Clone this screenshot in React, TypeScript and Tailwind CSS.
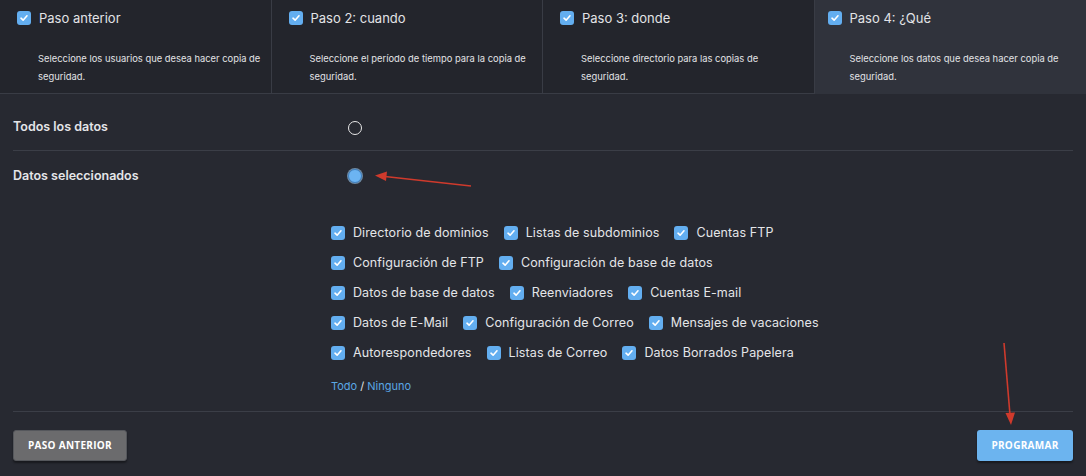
import React from 'react'

const font = { fontFamily: 'Inter, "Noto Sans", sans-serif' }

interface Step {
  title: string
  desc: string
  active?: boolean
}

const steps: Step[] = [
  { title: 'Paso anterior', desc: 'Seleccione los usuarios que desea hacer copia de seguridad.' },
  { title: 'Paso 2: cuando', desc: 'Seleccione el período de tiempo para la copia de seguridad.' },
  { title: 'Paso 3: donde', desc: 'Seleccione directorio para las copias de seguridad.' },
  { title: 'Paso 4: ¿Qué', desc: 'Seleccione los datos que desea hacer copia de seguridad.', active: true },
]

const rows: string[][] = [
  ['Directorio de dominios', 'Listas de subdominios', 'Cuentas FTP'],
  ['Configuración de FTP', 'Configuración de base de datos'],
  ['Datos de base de datos', 'Reenviadores', 'Cuentas E-mail'],
  ['Datos de E-Mail', 'Configuración de Correo', 'Mensajes de vacaciones'],
  ['Autorespondedores', 'Listas de Correo', 'Datos Borrados Papelera'],
]

function Check() {
  return (
    <span className="flex h-[14px] w-[14px] shrink-0 items-center justify-center rounded-[3px] bg-[#63aef0]">
      <svg width="10" height="10" viewBox="0 0 10 10" fill="none">
        <path d="M2 5.2 L4.1 7.2 L8 2.8" stroke="white" strokeWidth="1.6" strokeLinecap="round" strokeLinejoin="round" />
      </svg>
    </span>
  )
}

export default function App() {
  return (
    <div className="relative h-[476px] w-full overflow-hidden bg-[#272931] text-[#e4e5e8]" style={font}>
      <div className="grid grid-cols-4">
        {steps.map((s, i) => (
          <div
            key={s.title}
            className={
              s.active
                ? 'h-[94px] bg-[#30333c] pl-[13px] pt-[10px]'
                : 'h-[94px] border-b border-r border-[#393c45] bg-[#23252c] pl-[17px] pt-[10px]'
            }
          >
            <div className="flex items-center gap-[8px]">
              <Check />
              <span className="text-[13px] leading-[16px] text-[#e2e3e6]">{s.title}</span>
            </div>
            <p className={i === 3 ? 'mt-[24px] pl-[22px] pr-[6px] text-[9.4px] leading-[18px] text-[#e2e3e6]' : 'mt-[24px] pl-[21px] pr-[6px] text-[9.4px] leading-[18px] text-[#e2e3e6]'}>
              {s.desc}
            </p>
          </div>
        ))}
      </div>

      <div className="px-[13px]">
        <div className="flex h-[57px] items-center border-b border-[#3b3e47] pt-[11px]">
          <span className="w-[335px] text-[12.5px] font-semibold">Todos los datos</span>
          <span className="h-[14px] w-[14px] rounded-full border-[1.5px] border-[#e8e8e8]" />
        </div>
        <div className="flex h-[50px] items-center">
          <span className="w-[335px] text-[12.5px] font-semibold">Datos seleccionados</span>
          <span className="flex h-[14px] w-[14px] items-center justify-center rounded-full border border-[#3f7fbf] bg-[#6cb4f2] ring-1 ring-[#9cc9ee]/60" />
        </div>

        <div className="ml-[318px] mt-[17px]">
          {rows.map((r, i) => (
            <div key={i} className="flex h-[30px] items-center gap-[15px]">
              {r.map(label => (
                <label key={label} className="flex items-center gap-[8px] text-[12.5px] tracking-[0.1px] text-[#e4e5e8]">
                  <Check />
                  {label}
                </label>
              ))}
            </div>
          ))}
          <div className="mt-[10px] text-[11px] leading-[16px]">
            <span className="text-[#5aa7e4]">Todo</span>
            <span className="text-[#e4e5e8]"> / </span>
            <span className="text-[#5aa7e4]">Ninguno</span>
          </div>
        </div>

        <div className="mt-[17px] border-t border-[#3b3e47]" />

        <div className="mt-[18px] flex justify-between" style={{ fontFamily: '"Open Sans", sans-serif' }}>
          <button className="h-[31px] w-[114px] rounded-[3px] border border-[#55575c] bg-[#6b6b6d] text-[10px] font-bold tracking-[0.3px] text-white shadow-[0_2px_2px_rgba(0,0,0,0.4)]">
            PASO ANTERIOR
          </button>
          <button className="h-[31px] w-[96px] rounded-[3px] bg-[#6cb4ef] text-[10px] font-bold tracking-[0.3px] text-white shadow-[0_2px_2px_rgba(0,0,0,0.4)]">
            PROGRAMAR
          </button>
        </div>
      </div>

      <svg className="pointer-events-none absolute left-0 top-0" width="1086" height="476" viewBox="0 0 1086 476">
        <line x1="471" y1="186" x2="385" y2="176.5" stroke="#cf3a2c" strokeWidth="1.6" />
        <polygon points="375,175.5 387,171.5 386,181" fill="#cf3a2c" />
        <line x1="1004" y1="343" x2="1010" y2="415" stroke="#cf3a2c" strokeWidth="1.6" />
        <polygon points="1011,425 1005.5,413 1015,412.5" fill="#cf3a2c" />
      </svg>
    </div>
  )
}
